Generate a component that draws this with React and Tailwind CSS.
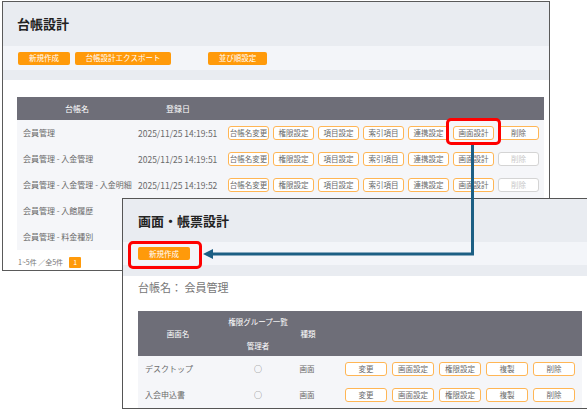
import React from "react";

const F = "font-['Noto_Sans_CJK_JP','Noto_Sans',sans-serif]";

function OBtn({ label, disabled, w = "w-[41px]" }) {
  return (
    <div
      className={`${w} h-[14px] rounded-[3px] border-[1.5px] bg-white flex items-center justify-center text-[7.5px] leading-none ${
        disabled ? "border-[#d4d4d4] text-[#c8c8c8]" : "border-[#ffb655] text-[#6a6a6a]"
      }`}
    >
      {label}
    </div>
  );
}

function FBtn({ label, w }) {
  return (
    <div className={`${w} h-[13px] rounded-[2px] bg-[#ff9a0a] text-white flex items-center justify-center text-[7.5px] leading-none`}>
      {label}
    </div>
  );
}

const w1Buttons = ["台帳名変更", "権限設定", "項目設定", "索引項目", "連携設定", "画面設計", "削除"];

function W1Row({ name, date, disabledDelete, showButtons }) {
  return (
    <div className="flex items-center h-[26px] bg-[#f5f6f9] text-[#6a6a6a]">
      <div className="w-[120px] pl-[6px] text-[8px] whitespace-nowrap">{name}</div>
      <div className="w-[91px] pl-[1px] text-[8.5px] whitespace-nowrap">{date}</div>
      {showButtons && (
        <div className="flex gap-[4px]">
          {w1Buttons.map((b) => (
            <OBtn key={b} label={b} disabled={b === "削除" && disabledDelete} />
          ))}
        </div>
      )}
    </div>
  );
}

const w2Buttons = ["変更", "画面設定", "権限設定", "複製", "削除"];

function W2Row({ name }) {
  return (
    <div className="flex items-center h-[26px] bg-[#f5f6f9] text-[#6a6a6a]">
      <div className="w-[80px] pl-[7px] text-[8px] whitespace-nowrap">{name}</div>
      <div className="w-[80px] text-center text-[8px]">○</div>
      <div className="w-[30px] text-center text-[7.5px] -ml-[6px]">画面</div>
      <div className="flex gap-[5px] ml-[23px]">
        {w2Buttons.map((b) => (
          <OBtn key={b} label={b} w="w-[42px]" />
        ))}
      </div>
    </div>
  );
}

export default function App() {
  return (
    <div className={`relative w-[587px] h-[409px] bg-white overflow-hidden ${F}`}>
      {/* Window 1 */}
      <div className="absolute left-[2px] top-[1px] w-[548px] h-[270px] border border-[#5a5a5a] bg-white flex flex-col">
        <div className="h-[44px] bg-[#e9ecf1] flex items-center pl-[14px]">
          <span className="text-[13px] font-bold text-[#222]">台帳設計</span>
        </div>
        <div className="h-[24px] bg-[#f3f5f9] flex items-center pl-[15px] gap-[5px]">
          <FBtn label="新規作成" w="w-[52px]" />
          <FBtn label="台帳設計エクスポート" w="w-[96px]" />
          <div className="w-[27px]" />
          <FBtn label="並び順設定" w="w-[59px]" />
        </div>
        <div className="h-[10px] bg-[#e9ecf1]" />
        <div className="pt-[17px] pl-[14px] pr-[5px]">
          <div className="flex items-center h-[23px] bg-[#6e6e78] text-white text-[8px]">
            <div className="w-[120px] text-center">台帳名</div>
            <div className="w-[82px] text-center">登録日</div>
          </div>
          <W1Row name="会員管理" date="2025/11/25 14:19:51" showButtons />
          <W1Row name="会員管理 - 入金管理" date="2025/11/25 14:19:51" showButtons disabledDelete />
          <W1Row name="会員管理 - 入金管理 - 入金明細" date="2025/11/25 14:19:52" showButtons disabledDelete />
          <W1Row name="会員管理 - 入館履歴" date="" />
          <W1Row name="会員管理 - 料金種別" date="" />
          <div className="flex items-center gap-[6px] pt-[7px] pl-[1px]">
            <span className="text-[7px] text-[#777]">1~5件 ／全5件</span>
            <span className="w-[12px] h-[11px] bg-[#ff9a0a] text-white text-[7px] flex items-center justify-center rounded-[1px]">1</span>
          </div>
        </div>
      </div>

      {/* Window 2 */}
      <div className="absolute left-[122px] top-[198px] w-[466px] h-[211px] border-[1.5px] border-[#555] bg-white flex flex-col">
        <div className="h-[43px] bg-[#e9ecf1] flex items-center pl-[15px]">
          <span className="text-[13px] font-bold text-[#222]">画面・帳票設計</span>
        </div>
        <div className="h-[23px] bg-[#f3f5f9] flex items-center pl-[15px]">
          <FBtn label="新規作成" w="w-[52px]" />
        </div>
        <div className="h-[11px] bg-[#e9ecf1]" />
        <div className="pl-[15px] pr-[5px]">
          <div className="h-[22px] flex items-center text-[11px] text-[#777]">台帳名： 会員管理</div>
          <div className="h-[13px]" />
          <div className="flex items-center h-[45px] bg-[#6e6e78] text-white text-[7.5px]">
            <div className="w-[80px] text-center">画面名</div>
            <div className="w-[80px] h-full flex flex-col items-center justify-between py-[5px]">
              <span>権限グループ一覧</span>
              <span>管理者</span>
            </div>
            <div className="w-[20px] text-center">種類</div>
          </div>
          <W2Row name="デスクトップ" />
          <W2Row name="入会申込書" />
        </div>
      </div>

      {/* Highlights */}
      <div className="absolute left-[446px] top-[118px] w-[55px] h-[27px] border-[3px] border-[#ff0000] rounded-[5px]" />
      <div className="absolute left-[128px] top-[241px] w-[74px] h-[28px] border-[3px] border-[#ff0000] rounded-[5px]" />

      {/* Arrow */}
      <svg className="absolute left-0 top-0" width="587" height="409" viewBox="0 0 587 409">
        <path d="M472.5 145 V254 H211" fill="none" stroke="#1c5f84" strokeWidth="3" />
        <polygon points="203,254 213,249 213,259" fill="#1c5f84" />
      </svg>
    </div>
  );
}
